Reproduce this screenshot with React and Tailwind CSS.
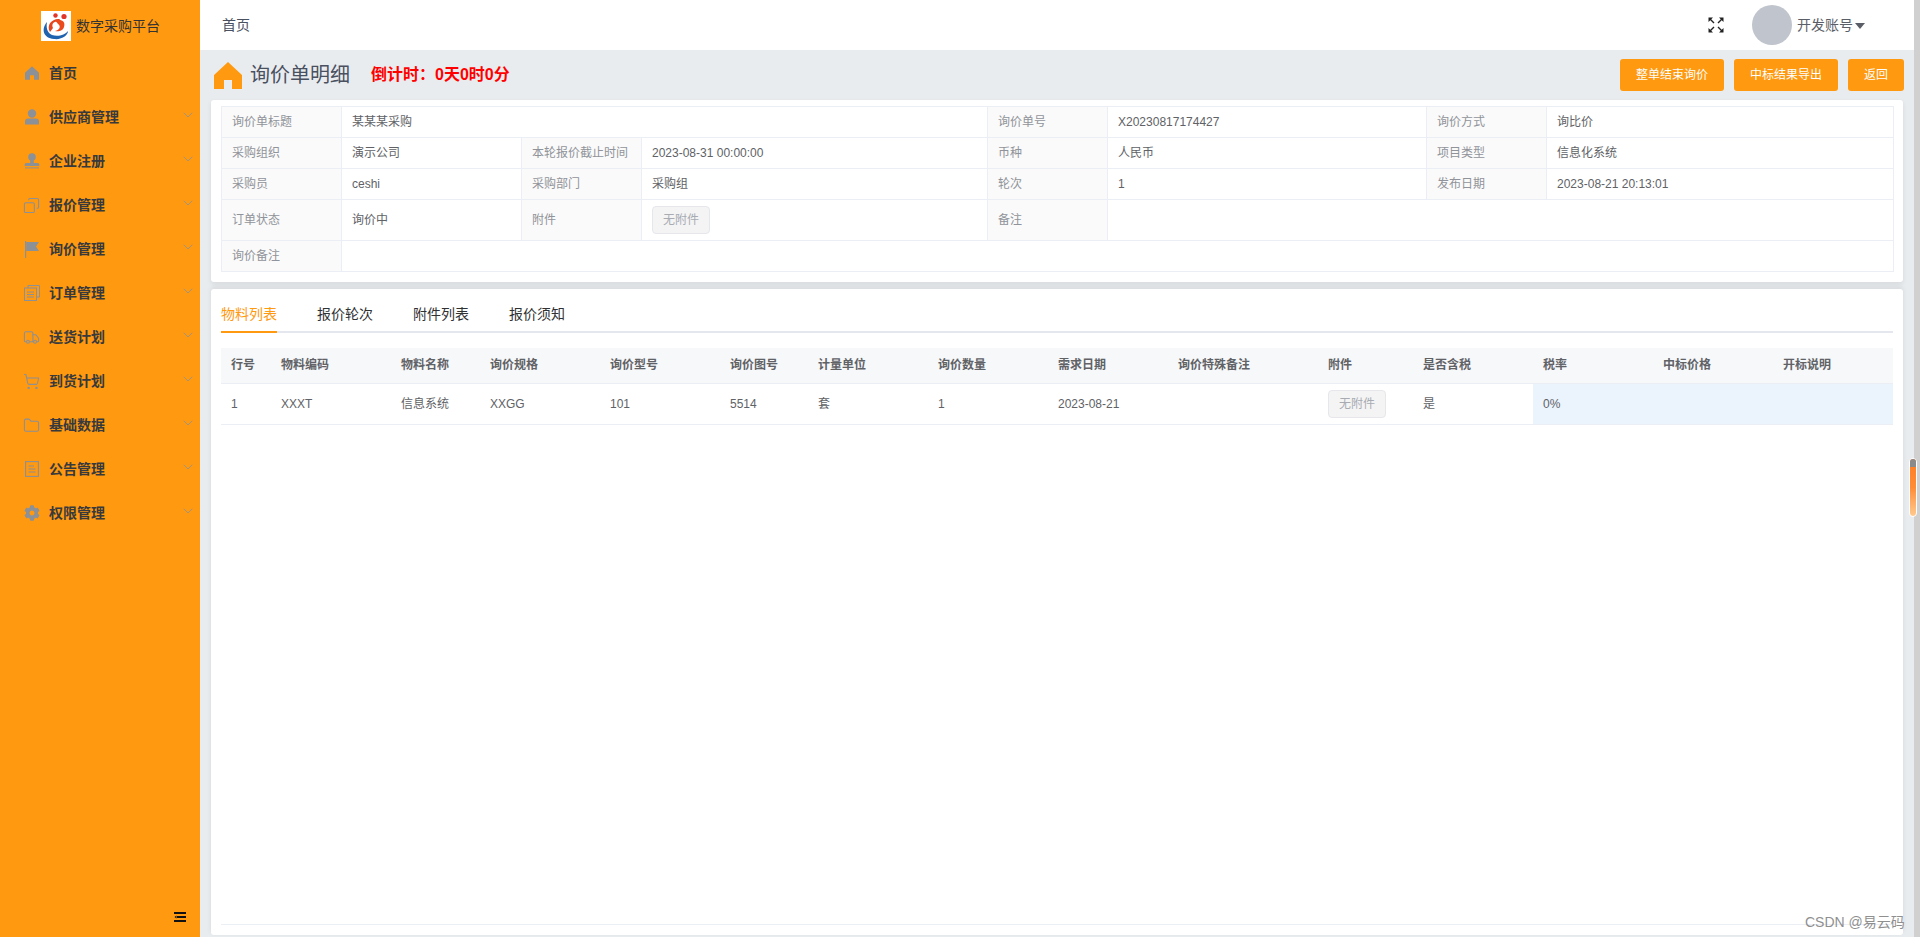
import { Copy, Truck, ShoppingCart, Folder } from 'lucide-react';
import { FaCog } from 'react-icons/fa';

const HomeIcon = ({ className }) => (
    <svg viewBox="0 0 28 27" className={className} fill="currentColor">
        <path d="M14 0 L28 13 V27 H18 V18 H10 V27 H0 V13 Z" />
    </svg>
);

const UserIcon = () => (
    <svg viewBox="0 0 16 16" className="w-4 h-4" fill="currentColor">
        <circle cx="8" cy="4.5" r="4.2" />
        <path d="M1 12.5 a3 3 0 0 1 3-3 h8 a3 3 0 0 1 3 3 V15.5 H1 Z" />
    </svg>
);

const StampIcon = () => (
    <svg viewBox="0 0 16 16" className="w-4 h-4" fill="currentColor">
        <circle cx="8" cy="4" r="3.8" />
        <path d="M6.2 7 h3.6 v3 h4 a1.5 1.5 0 0 1 1.5 1.5 V13 H.7 v-1.5 A1.5 1.5 0 0 1 2.2 10 h4 Z" />
        <rect x="1" y="14.4" width="14" height="1" />
    </svg>
);

const FlagIcon = () => (
    <svg viewBox="0 0 16 17" className="w-4 h-[17px]" fill="currentColor">
        <rect x="1" y="0" width="1.2" height="17" />
        <path d="M2.2 1 H15 L12 5.5 L15 10 H2.2 Z" />
    </svg>
);

const OrderIcon = () => (
    <svg viewBox="0 0 16 16" className="w-4 h-4" fill="none" stroke="currentColor" strokeWidth="1">
        <rect x=".5" y="3" width="12" height="12.5" />
        <path d="M4 3 V.5 H15.5 V12 H12.5 M3 7 H10 M3 9.5 H10 M3 12 H10" />
    </svg>
);

const NoticeIcon = () => (
    <svg viewBox="0 0 14 16" className="w-[14px] h-4" fill="none" stroke="currentColor" strokeWidth="1.1">
        <rect x=".6" y=".6" width="12.8" height="14.8" />
        <path d="M3.5 5 H9 M3.5 8 H10.5 M3.5 11 H10.5" />
    </svg>
);

const Chevron = () => (
    <svg viewBox="0 0 10 6" className="absolute left-[183px] top-[17px] w-[10px] h-[6px] text-[#8f9299]" fill="none" stroke="currentColor" strokeWidth="0.8">
        <path d="M0.7 0.7 L5 5 L9.3 0.7" />
    </svg>
);

const menus = [
    { label: '首页', icon: <HomeIcon className="w-[14px] h-[14px]" />, leaf: true },
    { label: '供应商管理', icon: <UserIcon /> },
    { label: '企业注册', icon: <StampIcon /> },
    { label: '报价管理', icon: <Copy size={17} strokeWidth={1.5} className="-scale-x-100" /> },
    { label: '询价管理', icon: <FlagIcon /> },
    { label: '订单管理', icon: <OrderIcon /> },
    { label: '送货计划', icon: <Truck size={17} strokeWidth={1.5} /> },
    { label: '到货计划', icon: <ShoppingCart size={17} strokeWidth={1.5} /> },
    { label: '基础数据', icon: <Folder size={17} strokeWidth={1.5} /> },
    { label: '公告管理', icon: <NoticeIcon /> },
    { label: '权限管理', icon: <FaCog size={16} /> },
];

const Logo = () => (
    <svg viewBox="0 0 30 30" className="w-[30px] h-[30px] bg-white">
        <path d="M6 11 C0 18 2 27 13 28 C21 29 27 24 27 20 C24 24 17 26 11 24 C6 22 5 16 6 11 Z" fill="#1f62ae" />
        <path d="M9 21 C5 14 11 7 19 8 L17 11 C13 10 10 13 12 17 Z" fill="#e2451f" />
        <path d="M14 9 C20 8 25 10 23 16 C22 20 17 21 14 20 C19 19 20 15 17 13 Z" fill="#ea4a1c" />
        <circle cx="14.5" cy="4.5" r="2.2" fill="#e2352a" />
        <circle cx="23" cy="5.5" r="2.6" fill="#e2352a" />
    </svg>
);

const Sidebar = () => (
    <aside className="w-[200px] shrink-0 h-full bg-[#ff9910] flex flex-col relative">
        <div className="h-[51px] flex items-center pl-[41px] gap-[5px] text-sm text-[#333]">
            <Logo />
            <span>数字采购平台</span>
        </div>
        {menus.map((m) => (
            <div key={m.label} className="h-11 flex items-center relative text-[#37393d] font-bold text-sm">
                <span className="w-[49px] shrink-0 flex justify-center pl-[14px] text-[#8c9097]">{m.icon}</span>
                <span>{m.label}</span>
                {!m.leaf && <Chevron />}
            </div>
        ))}
        <svg viewBox="0 0 12 10" className="absolute left-[174px] top-[912px] w-3 h-[10px]" fill="#111">
            <rect width="12" height="2" />
            <rect x="3" y="4" width="9" height="2" />
            <path d="M2.5 3.5 V6.5 L0.5 5 Z" />
            <rect y="8" width="12" height="2" />
        </svg>
    </aside>
);

const Topbar = () => (
    <header className="h-[50px] shrink-0 bg-white flex items-center justify-between pl-[22px] pr-[49px]">
        <span className="text-sm text-[#495060]">首页</span>
        <div className="flex items-center">
            <svg viewBox="0 0 16 16" className="w-4 h-4 mr-7 text-[#222]" fill="currentColor" stroke="currentColor">
                <path d="M0.5 0.5 H5 L0.5 5 Z M15.5 0.5 V5 L11 0.5 Z M0.5 15.5 V11 L5 15.5 Z M15.5 15.5 H11 L15.5 11 Z" stroke="none" />
                <path d="M2 2 L6 6 M14 2 L10 6 M2 14 L6 10 M14 14 L10 10" strokeWidth="1.4" fill="none" />
            </svg>
            <div className="w-10 h-10 rounded-full bg-[#c0c4cc]" />
            <span className="ml-[5px] text-sm text-[#5a5e66]">开发账号</span>
            <span className="ml-[2px] mt-[2px] border-x-[5px] border-x-transparent border-t-[6px] border-t-[#5a5e66]" />
        </div>
    </header>
);

const OrangeBtn = ({ children }) => (
    <button className="h-8 px-4 rounded-[3px] bg-[#ff9910] text-white text-xs">{children}</button>
);

const NoFile = () => (
    <button className="h-7 w-[58px] rounded-[4px] bg-[#f4f4f5] border border-[#e6e7eb] text-[#a8abb2] text-xs">无附件</button>
);

const Lab = ({ children }) => (
    <td className="border border-[#ebeef5] bg-[#fafafa] text-[#909399] px-[10px]">{children}</td>
);
const Val = ({ children, span }) => (
    <td colSpan={span} className="border border-[#ebeef5] text-[#606266] px-[10px]">{children}</td>
);

const InfoTable = () => (
    <table className="w-[1672px] table-fixed border-collapse text-xs">
        <colgroup>
            <col className="w-[120px]" />
            <col className="w-[180px]" />
            <col className="w-[120px]" />
            <col className="w-[346px]" />
            <col className="w-[120px]" />
            <col className="w-[319px]" />
            <col className="w-[120px]" />
            <col className="w-[347px]" />
        </colgroup>
        <tbody>
            <tr className="h-[31px]">
                <Lab>询价单标题</Lab>
                <Val span={3}>某某某采购</Val>
                <Lab>询价单号</Lab>
                <Val>X20230817174427</Val>
                <Lab>询价方式</Lab>
                <Val>询比价</Val>
            </tr>
            <tr className="h-[31px]">
                <Lab>采购组织</Lab>
                <Val>演示公司</Val>
                <Lab>本轮报价截止时间</Lab>
                <Val>2023-08-31 00:00:00</Val>
                <Lab>币种</Lab>
                <Val>人民币</Val>
                <Lab>项目类型</Lab>
                <Val>信息化系统</Val>
            </tr>
            <tr className="h-[31px]">
                <Lab>采购员</Lab>
                <Val>ceshi</Val>
                <Lab>采购部门</Lab>
                <Val>采购组</Val>
                <Lab>轮次</Lab>
                <Val>1</Val>
                <Lab>发布日期</Lab>
                <Val>2023-08-21 20:13:01</Val>
            </tr>
            <tr className="h-[41px]">
                <Lab>订单状态</Lab>
                <Val>询价中</Val>
                <Lab>附件</Lab>
                <Val><NoFile /></Val>
                <Lab>备注</Lab>
                <Val span={3} />
            </tr>
            <tr className="h-[31px]">
                <Lab>询价备注</Lab>
                <Val span={7} />
            </tr>
        </tbody>
    </table>
);

const tabs = ['物料列表', '报价轮次', '附件列表', '报价须知'];

const columns = [
    ['行号', 'w-[50px]'],
    ['物料编码', 'w-[120px]'],
    ['物料名称', 'w-[89px]'],
    ['询价规格', 'w-[120px]'],
    ['询价型号', 'w-[120px]'],
    ['询价图号', 'w-[88px]'],
    ['计量单位', 'w-[120px]'],
    ['询价数量', 'w-[120px]'],
    ['需求日期', 'w-[120px]'],
    ['询价特殊备注', 'w-[150px]'],
    ['附件', 'w-[95px]'],
    ['是否含税', 'w-[120px]'],
    ['税率', 'w-[120px]'],
    ['中标价格', 'w-[120px]'],
    ['开标说明', 'w-[120px]'],
];

const row = ['1', 'XXXT', '信息系统', 'XXGG', '101', '5514', '套', '1', '2023-08-21', '', null, '是', '0%', '', ''];

const MaterialTable = () => (
    <table className="w-[1672px] table-fixed border-collapse text-xs text-[#606266]">
        <thead>
            <tr className="h-[35px] bg-[#f7f8fa] border-b border-[#ebeef5]">
                {columns.map(([name, w]) => (
                    <th key={name} className={`${w} px-[10px] text-left font-bold`}>{name}</th>
                ))}
            </tr>
        </thead>
        <tbody>
            <tr className="h-[41px] border-b border-[#ebeef5]">
                {row.map((v, i) => (
                    <td key={i} className={`px-[10px] ${i >= 12 ? 'bg-[#ebf3fd]' : ''}`}>
                        {v === null ? <NoFile /> : v}
                    </td>
                ))}
            </tr>
        </tbody>
    </table>
);

const App = () => (
    <div className="h-[937px] w-[1920px] overflow-hidden flex relative font-['Liberation_Sans','Noto_Sans_CJK_SC',sans-serif]">
        <Sidebar />
        <main className="flex-1 flex flex-col min-w-0 bg-[#e9ecef]">
            <Topbar />
            <div className="h-[50px] shrink-0 flex items-center pl-[14px] pr-[10px]">
                <HomeIcon className="w-7 h-[27px] text-[#ff9910]" />
                <h1 className="ml-2 text-xl text-[#495060]">询价单明细</h1>
                <span className="ml-[21px] text-base font-bold text-[#ff0000]">倒计时：0天0时0分</span>
                <div className="ml-auto flex gap-[10px]">
                    <OrangeBtn>整单结束询价</OrangeBtn>
                    <OrangeBtn>中标结果导出</OrangeBtn>
                    <OrangeBtn>返回</OrangeBtn>
                </div>
            </div>
            <section className="mx-[11px] h-[182px] shrink-0 bg-white rounded-[3px] px-[10px] pt-[6px] shadow-[0_2px_5px_rgba(0,0,0,0.08)]">
                <InfoTable />
            </section>
            <section className="mx-[11px] mt-[7px] h-[646px] shrink-0 bg-white rounded-[3px] px-[10px] shadow-[0_-2px_5px_rgba(0,0,0,0.08)] flex flex-col">
                <div className="h-[44px] shrink-0 flex gap-10 border-b-2 border-[#e4e7ed] text-sm text-[#303133]">
                    {tabs.map((t, i) => (
                        <div
                            key={t}
                            className={`h-[44px] pt-[17px] leading-[16px] ${i === 0 ? 'text-[#ff9910] border-b-2 border-[#ff9910]' : ''}`}
                        >
                            {t}
                        </div>
                    ))}
                </div>
                <div className="mt-[15px] flex-1 border-b border-[#ebeef5] mb-[10px]">
                    <MaterialTable />
                </div>
            </section>
        </main>
        <div className="w-[6px] shrink-0 bg-[#d0d0d0]" />
        <div className="absolute left-[1909px] top-[458px] w-2 h-[59px] rounded-full border border-white bg-gradient-to-b from-[#ff7d22] via-[#ff8c35] to-[#ffc98c] overflow-hidden">
            <div className="h-2 bg-[#8a8a8a]" />
        </div>
        <span className="absolute left-[1805px] top-[912px] text-sm text-[#8f8f8f]">CSDN @易云码</span>
    </div>
);

export default App;
